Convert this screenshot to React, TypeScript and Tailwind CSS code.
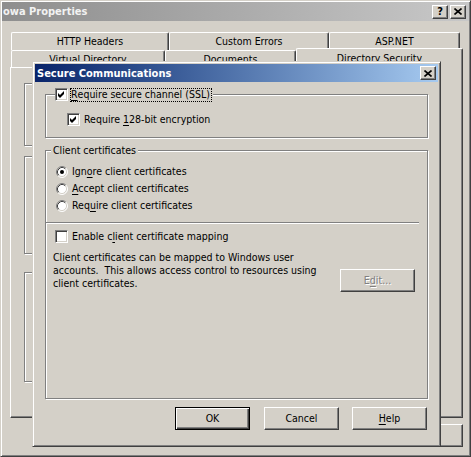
import React from "react";

const raised =
  "border border-t-white border-l-white border-r-[#404040] border-b-[#404040] shadow-[inset_-1px_-1px_0_#808080]";
const etched =
  "border border-[#808080] shadow-[inset_1px_1px_0_#ffffff,1px_1px_0_#ffffff]";

const K = ({ children }: { children: React.ReactNode }) => (
  <span className="underline underline-offset-[2px]">{children}</span>
);

const Check = ({ checked }: { checked?: boolean }) => (
  <span className="flex h-[13px] w-[13px] shrink-0 items-center justify-center border border-t-[#808080] border-l-[#808080] border-r-white border-b-white bg-white shadow-[inset_1px_1px_0_#404040,inset_-1px_-1px_0_#d4d0c8]">
    {checked && (
      <svg width="7" height="7" viewBox="0 0 7 7">
        <path d="M0 2L2 4L6 0V3L2 7L0 5Z" fill="#000" />
      </svg>
    )}
  </span>
);

const Radio = ({ checked }: { checked?: boolean }) => (
  <svg width="12" height="12" viewBox="0 0 12 12" className="shrink-0">
    <circle cx="6" cy="6" r="5" fill="#fff" />
    <path d="M2.11 9.89A5.5 5.5 0 0 1 9.89 2.11" stroke="#808080" fill="none" />
    <path d="M9.89 2.11A5.5 5.5 0 0 1 2.11 9.89" stroke="#fff" fill="none" />
    <path d="M2.82 9.18A4.5 4.5 0 0 1 9.18 2.82" stroke="#404040" fill="none" />
    <path d="M9.18 2.82A4.5 4.5 0 0 1 2.82 9.18" stroke="#d4d0c8" fill="none" />
    {checked && <circle cx="6" cy="6" r="2" fill="#000" />}
  </svg>
);

const Button = ({
  children,
  isDefault,
  disabled,
  className = "",
}: {
  children: React.ReactNode;
  isDefault?: boolean;
  disabled?: boolean;
  className?: string;
}) => (
  <div
    className={`flex h-[23px] w-[75px] shrink-0 items-center justify-center ${
      isDefault
        ? "border border-black shadow-[inset_1px_1px_0_#ffffff,inset_-1px_-1px_0_#404040,inset_-2px_-2px_0_#808080]"
        : raised
    } ${disabled ? "text-[#808080] [text-shadow:1px_1px_0_#ffffff]" : ""} ${className}`}
  >
    {children}
  </div>
);

const CloseGlyph = () => (
  <svg width="8" height="7" viewBox="0 0 8 7">
    <path d="M0.5 0.5L7.5 6.5M7.5 0.5L0.5 6.5" stroke="#000" strokeWidth="1.6" />
  </svg>
);

const CaptionButton = ({ children }: { children: React.ReactNode }) => (
  <div className={`flex h-[14px] w-[16px] items-center justify-center bg-[#d4d0c8] ${raised}`}>
    {children}
  </div>
);

const Tab = ({ label, width, selected }: { label: string; width: string; selected?: boolean }) => (
  <div
    className={`flex shrink-0 justify-center rounded-t-[2px] border-t border-l border-r border-t-white border-l-white border-r-[#404040] bg-[#d4d0c8] shadow-[inset_-1px_0_0_#808080] ${width} ${
      selected ? "relative z-10 -mb-px h-[20px] pt-[3px]" : "h-full pt-[2px]"
    }`}
  >
    {label}
  </div>
);

const SecureCommunications = () => (
  <div className="absolute left-[32px] top-[61px] z-20 flex h-[386px] w-[409px] flex-col border border-t-[#d4d0c8] border-l-[#d4d0c8] border-r-[#404040] border-b-[#404040] bg-[#d4d0c8] p-[2px] shadow-[inset_1px_1px_0_#ffffff,inset_-1px_-1px_0_#808080]">

    {/* Title */}

    <div className="flex h-[18px] shrink-0 items-center bg-gradient-to-r from-[#0a246a] to-[#a6caf0] pl-[2px] pr-[2px]">
      <span className="flex-1 text-[11px] font-bold text-white">Secure Communications</span>
      <CaptionButton>
        <CloseGlyph />
      </CaptionButton>
    </div>

    <div className="flex flex-col px-[10px]">

      {/* SSL */}

      <div className={`${etched} mt-[12px] flex h-[44px] flex-col`}>
        <div className="-mt-[7px] ml-[9px] flex h-[13px] w-fit items-center bg-[#d4d0c8] pr-[1px]">
          <Check checked />
          <span className="ml-[2px] flex h-[14px] items-center border border-dotted border-black pr-[1px]">
            <K>R</K>equire secure channel (SSL)
          </span>
        </div>
        <div className="ml-[21px] mt-[12px] flex h-[13px] items-center gap-[4px]">
          <Check checked />
          <span>
            Require <K>1</K>28-bit encryption
          </span>
        </div>
      </div>

      {/* Client certificates */}

      <div className={`${etched} mt-[12px] flex h-[249px] flex-col`}>
        <div className="-mt-[7px] ml-[5px] w-fit bg-[#d4d0c8] px-[2px]">Client certificates</div>

        <div className="mt-[6px] flex flex-col pl-[10px]">
          <div className="flex h-[17px] items-center gap-[4px]">
            <Radio checked />
            <span>
              Ign<K>o</K>re client certificates
            </span>
          </div>
          <div className="flex h-[17px] items-center gap-[4px]">
            <Radio />
            <span>
              <K>A</K>ccept client certificates
            </span>
          </div>
          <div className="flex h-[17px] items-center gap-[4px]">
            <Radio />
            <span>
              Req<K>u</K>ire client certificates
            </span>
          </div>
        </div>

        <div className="mr-[8px] mt-[8px] border-t border-b border-t-[#808080] border-b-white" />

        <div className="ml-[9px] mt-[4px] flex h-[17px] items-center gap-[4px]">
          <Check />
          <span>
            Enable c<K>l</K>ient certificate mapping
          </span>
        </div>

        <div className="mt-[6px] flex items-start pl-[7px] pr-[12px]">
          <p className="flex-1">
            Client certificates can be mapped to Windows user
            <br />
            accounts.{"\u00a0 "}This allows access control to resources using
            <br />
            client certificates.
          </p>
          <Button disabled className="mt-[18px]">
            E<K>d</K>it...
          </Button>
        </div>
      </div>

    </div>

    {/* Buttons */}

    <div className="mt-[8px] flex justify-end pr-[11px]">
      <Button isDefault>OK</Button>
      <Button className="ml-[14px]">Cancel</Button>
      <Button className="ml-[13px]">
        <K>H</K>elp
      </Button>
    </div>

  </div>
);

const App = () => {
  return (
    <div className="relative h-[457px] w-[471px] overflow-hidden bg-[#d4d0c8] font-['DejaVu_Sans_Condensed','Liberation_Sans',sans-serif] text-[10.5px] leading-[13px] text-black">

      {/* owa Properties */}

      <div className="flex h-full w-full flex-col border border-t-[#d4d0c8] border-l-[#d4d0c8] border-r-[#404040] border-b-[#404040] p-[1px] shadow-[inset_1px_1px_0_#ffffff,inset_-1px_-1px_0_#808080]">

        <div className="flex h-[19px] shrink-0 items-center bg-gradient-to-r from-[#8e8e8e] to-[#c8c8c8] pl-[1px] pr-[3px]">
          <span className="flex-1 text-[11px] font-bold text-[#f2f2f2]">owa Properties</span>
          <div className="flex gap-[2px]">
            <CaptionButton>
              <span className="text-[11px] font-bold leading-[10px]">?</span>
            </CaptionButton>
            <CaptionButton>
              <CloseGlyph />
            </CaptionButton>
          </div>
        </div>

        {/* Tabs */}

        <div className="ml-[8px] mt-[11px] flex w-[453px] flex-col">
          <div className="flex h-[18px] pl-[1px]">
            <Tab label="HTTP Headers" width="w-[158px]" />
            <Tab label="Custom Errors" width="w-[160px]" />
            <Tab label="ASP.NET" width="w-[131px]" />
          </div>
          <div className="flex h-[17px] items-end pl-[1px]">
            <Tab label="Virtual Directory" width="w-[154px]" />
            <Tab label="Documents" width="w-[131px]" />
            <Tab label="Directory Security" width="w-[167px]" selected />
          </div>

          <div className={`flex h-[351px] flex-col pl-[13px] pt-[15px] ${raised}`}>
            <div className={`${etched} h-[63px] w-[413px]`} />
            <div className={`${etched} mt-[10px] h-[98px] w-[413px]`} />
            <div className={`${etched} mt-[18px] h-[110px] w-[413px]`} />
          </div>
        </div>

        <div className="mt-[6px] flex justify-end gap-[6px] pr-[6px]">
          <Button>OK</Button>
          <Button>Cancel</Button>
          <Button>Apply</Button>
          <Button>Help</Button>
        </div>

      </div>

      <SecureCommunications />

    </div>
  );
};

export default App;
